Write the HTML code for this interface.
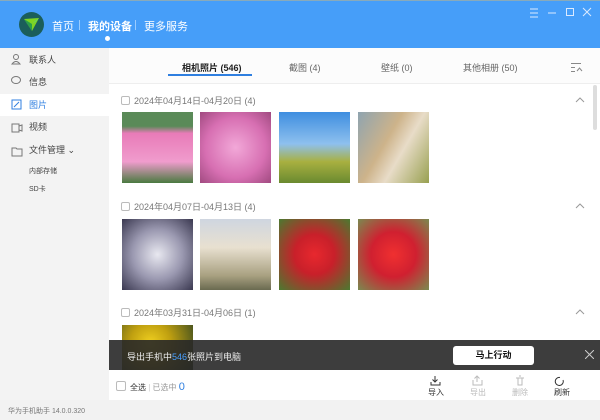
<!DOCTYPE html>
<html><head><meta charset="utf-8"><style>
*{margin:0;padding:0;box-sizing:border-box}
body{width:600px;height:420px;overflow:hidden;background:#f2f2f2;font-family:"Liberation Sans","Noto Sans CJK SC",sans-serif;position:relative;font-size:9px;color:#333}
.hdr{position:absolute;left:0;top:0;width:600px;height:48px;background:#469ef9;border-top:1px solid #8ab}
.logo{position:absolute;left:19px;top:11px;width:25px;height:25px;border-radius:50%;background:#1b5e5a;overflow:hidden}
.nav{position:absolute;top:17px;color:#fff;font-size:11px;white-space:nowrap}
.side{position:absolute;left:0;top:48px;width:109px;height:352px;background:#f3f3f3}
.si{position:absolute;left:0;width:109px;height:22px;font-size:9px;color:#444;padding-left:29px;line-height:22px}
.main{position:absolute;left:109px;top:48px;width:491px;height:352px;background:#fff}
.tabs{position:absolute;left:0;top:0;width:491px;height:36px;background:#fcfcfc;border-bottom:1px solid #eee}
.tab{position:absolute;top:13px;font-size:9px;color:#666;white-space:nowrap}
.sec{position:absolute;left:12px;font-size:9px;color:#777;white-space:nowrap}
.cb{display:inline-block;width:9px;height:9px;border:1px solid #bbb;border-radius:2px;vertical-align:-1px;margin-right:4px;background:#fff}
.ph{position:absolute;width:71px;height:71px}
.car{position:absolute;left:466px;width:10px;height:10px}
</style></head><body>
<div class="hdr">
<div class="logo"><svg width="25" height="25"><polygon points="5,7 20,6 13,19" fill="#7ed321"/><polygon points="5,7 13,12 13,19" fill="#2a9d4a"/><polygon points="20,6 13,12 17,9" fill="#3cf"/></svg></div>
<div class="nav" style="left:52px">首页</div>
<div style="position:absolute;left:79px;top:19px;width:1px;height:10px;background:#9cf"></div>
<div class="nav" style="left:88px;font-weight:bold">我的设备</div>
<div style="position:absolute;left:105px;top:35px;width:5px;height:5px;border-radius:50%;background:#fff"></div>
<div style="position:absolute;left:135px;top:19px;width:1px;height:10px;background:#9cf"></div>
<div class="nav" style="left:144px">更多服务</div>
<svg style="position:absolute;left:528px;top:5px" width="66" height="14" fill="none" stroke="#dbeaff" stroke-width="1"><path d="M2 3h8M2 7h8M2 11h8"/><path d="M20 7h8"/><rect x="38.5" y="2.5" width="7" height="7"/><path d="M55 2l8 8M63 2l-8 8"/></svg>
</div>
<div class="side">
<div class="si" style="top:1px">联系人</div>
<div class="si" style="top:23px">信息</div>
<div class="si" style="top:46px;background:#fff;color:#2f7fe0">图片</div>
<div class="si" style="top:68px">视频</div>
<div class="si" style="top:91px">文件管理 ⌄</div>
<div class="si" style="top:113px;font-size:7px">内部存储</div>
<div class="si" style="top:131px;font-size:7px">SD卡</div>
<svg style="position:absolute;left:11px;top:5px" width="12" height="120" fill="none" stroke="#777" stroke-width="1"><circle cx="5" cy="4" r="2.5"/><path d="M1 11 q4-5 8 0z"/><ellipse cx="5" cy="27" rx="4.5" ry="3.5"/><rect x="1" y="47" width="9" height="9" stroke="#2f7fe0"/><path d="M3 54 l5-5" stroke="#2f7fe0"/><rect x="1" y="71" width="7" height="8"/><path d="M8 73 l3-1 v6 l-3-1"/><path d="M1 95 h4 l1 1 h5 v7 h-10z"/></svg>
</div>
<div class="main">
<div class="tabs">
<div class="tab" style="left:73px;color:#222;font-weight:bold">相机照片 (546)</div>
<div style="position:absolute;left:59px;top:26px;width:84px;height:2px;background:#2f7fe0"></div>
<div class="tab" style="left:180px">截图 (4)</div>
<div class="tab" style="left:272px">壁纸 (0)</div>
<div class="tab" style="left:354px">其他相册 (50)</div>
<svg style="position:absolute;left:462px;top:14px" width="12" height="10" fill="none" stroke="#888"><path d="M0 1.5h10M0 5.5h4M0 9.5h4M6 9l2.5-3 2.5 3"/></svg>
</div>
<div class="sec" style="top:46px"><span class="cb"></span>2024年04月14日-04月20日 (4)</div>
<svg class="car" style="top:47px" fill="none" stroke="#999"><path d="M1 7l4-4 4 4"/></svg>
<div class="ph" style="left:13px;top:64px;background:linear-gradient(#5a8a58 0 20%,#e87bb8 30%,#f09ccd 70%,#4a7a40)"></div>
<div class="ph" style="left:91px;top:64px;background:radial-gradient(circle,#f2a8d8,#d76fb2 60%,#a04a80)"></div>
<div class="ph" style="left:170px;top:64px;background:linear-gradient(#3f8ee0,#8ec0ee 45%,#a8b040 70%,#6a8a30)"></div>
<div class="ph" style="left:249px;top:64px;background:linear-gradient(120deg,#8fa4b0,#cdb38a 40%,#e8dcc8 60%,#98a050)"></div>
<div class="sec" style="top:152px"><span class="cb"></span>2024年04月07日-04月13日 (4)</div>
<svg class="car" style="top:153px" fill="none" stroke="#999"><path d="M1 7l4-4 4 4"/></svg>
<div class="ph" style="left:13px;top:171px;background:radial-gradient(circle,#e8e8f0,#9a98b0 50%,#3a3850)"></div>
<div class="ph" style="left:91px;top:171px;background:linear-gradient(#cfd6e0,#e8e0d0 40%,#a8a080 80%,#6a6a50)"></div>
<div class="ph" style="left:170px;top:171px;background:radial-gradient(circle,#e8282e,#c8202a 40%,#4a7a30)"></div>
<div class="ph" style="left:249px;top:171px;background:radial-gradient(circle,#f03030,#d02030 45%,#7a8a50)"></div>
<div class="sec" style="top:258px"><span class="cb"></span>2024年03月31日-04月06日 (1)</div>
<svg class="car" style="top:259px" fill="none" stroke="#999"><path d="M1 7l4-4 4 4"/></svg>
<div class="ph" style="left:13px;top:277px;height:45px;background:radial-gradient(circle at 40% 40%,#f0d020,#c0a010 40%,#3a4a20)"></div>
<div style="position:absolute;left:484px;top:37px;width:4px;height:45px;border-radius:2px;background:#ddd"></div>
<div style="position:absolute;left:0;top:292px;width:491px;height:30px;background:rgba(40,40,40,.9);color:#eee;font-size:9px">
<div style="position:absolute;left:18px;top:10px">导出手机中<span style="color:#4aa0ff">546</span>张照片到电脑</div>
<div style="position:absolute;left:344px;top:6px;width:81px;height:19px;background:#fff;border-radius:3px;color:#111;font-weight:bold;text-align:center;line-height:19px">马上行动</div>
<svg style="position:absolute;left:476px;top:10px" width="9" height="9" stroke="#ccc"><path d="M0 0l9 9M9 0l-9 9"/></svg>
</div>
<div style="position:absolute;left:0;top:322px;width:491px;height:30px;background:#fff">
<div style="position:absolute;left:7px;top:11px;font-size:8px;color:#333;white-space:nowrap"><span class="cb" style="width:10px;height:10px"></span>全选 <span style="color:#ccc">|</span> <span style="color:#999">已选中</span> <span style="color:#2f7fe0;font-size:11px">0</span></div>
<svg style="position:absolute;left:321px;top:5px" width="140" height="12" fill="none" stroke-width="1"><g stroke="#333"><path d="M5 1v6M2.5 4.5l2.5 2.5 2.5-2.5M1 7v3h9V7"/></g><g stroke="#bbb"><path d="M47 7V1M44.5 3.5L47 1l2.5 2.5M43 5v5h9V5"/><path d="M86 3h8M88 3v7h4V3M89 1h2"/></g><path d="M130 2.5a4 4 0 1 0 3 2.5" stroke="#333"/></svg>
<div style="position:absolute;left:319px;top:17px;font-size:8px">导入</div>
<div style="position:absolute;left:361px;top:17px;font-size:8px;color:#bbb">导出</div>
<div style="position:absolute;left:403px;top:17px;font-size:8px;color:#bbb">删除</div>
<div style="position:absolute;left:445px;top:17px;font-size:8px">刷新</div>
</div>
</div>
<div style="position:absolute;left:8px;top:406px;font-size:7px;color:#777">华为手机助手 14.0.0.320</div>
</body></html>
